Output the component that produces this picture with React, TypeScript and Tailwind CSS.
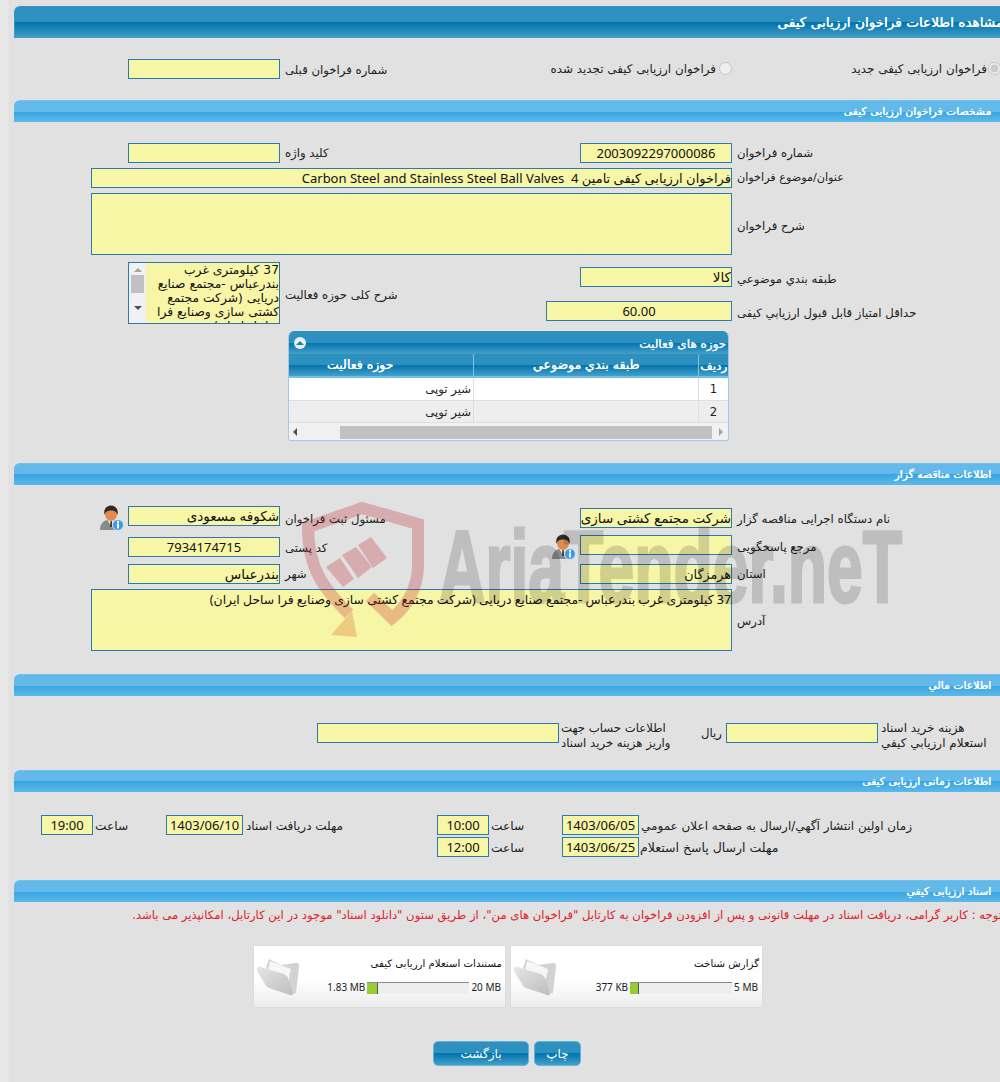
import type { ReactNode } from "react";

const titleBg = "bg-[linear-gradient(#2e90bf_0,#2e90bf_50%,#0074ad_50%,#459fc8_100%)]";
const fourCols = "grid grid-cols-[268px_152px_300px_266px]";
const fauxBold = "[text-shadow:0.5px_0_0_currentColor]";

function Bar({ children }: { children: ReactNode }) {
  return (
    <div className={`h-[22px] rounded-tl-[6px] border-t border-[#6cc4ec] bg-[linear-gradient(#62b9ea_0,#62b9ea_50%,#37a5e0_50%,#5db9ea_100%)] pr-[9px] text-[10.800px] leading-[21px] text-white ${fauxBold}`}>
      {children}
    </div>
  );
}

function Box({ children, className = "", size = "text-[13px]" }: { children?: ReactNode; className?: string; size?: string }) {
  return (
    <div className={`h-5 shrink-0 overflow-hidden border border-[#2a7aaf] bg-[#f7f5a6] font-['Noto_Sans','DejaVu_Sans',sans-serif] ${size} leading-[19px] whitespace-nowrap text-[#111] ${className}`}>
      {children}
    </div>
  );
}

function Label({ children, className = "" }: { children: ReactNode; className?: string }) {
  return <div className={`flex items-center justify-end pl-[5px] text-left whitespace-nowrap ${className}`}>{children}</div>;
}

function PersonIcon() {
  return (
    <svg width="24" height="26" viewBox="0 0 24 26" className="shrink-0">
      <path d="M0 25c0-6 3-9 7-10h7c4 1 6 4 6 10z" fill="#8a8a8a" />
      <path d="M7.500 15l3.500 6 3.500-6z" fill="#f4f4f4" />
      <path d="M10.400 16h1.400l.6 6h-2.400z" fill="#3c3c3c" />
      <ellipse cx="11" cy="9" rx="6" ry="7" fill="#e08a4c" />
      <path d="M4.600 10C3 4 7 .500 11 .500s8 3.500 6.400 9.500c-1-3.500-3-4.500-6.400-4.500S5.600 6.500 4.600 10z" fill="#2b2b2b" />
      <circle cx="18" cy="20" r="5.500" fill="#3d9ae0" stroke="#d4e9f8" />
      <rect x="17" y="18.500" width="2" height="5" fill="#fff" />
      <rect x="17" y="15.800" width="2" height="2" fill="#fff" />
    </svg>
  );
}

function FolderIcon() {
  return (
    <svg width="44" height="38" viewBox="0 0 44 38" className="shrink-0">
      <defs>
        <linearGradient id="folder-front" x1="0" y1="0" x2="1" y2="1">
          <stop offset="0" stopColor="#e6e6e6" />
          <stop offset="1" stopColor="#bdbdbd" />
        </linearGradient>
      </defs>
      <path d="M13 1l12 6 15-2c3 0 3 2 3 4l-3 25c0 2-2 2-3 1L10 10z" fill="#d2d2d2" />
      <path d="M14 3l21 8-3 14L12 12z" fill="#f7f7f7" />
      <path d="M1 11c0-2 2-3 4-2l9 3 14 4c2 1 3 2 4 4l5 15c0 2-1 3-3 2L13 30c-2-1-3-2-4-4L1 13z" fill="url(#folder-front)" />
    </svg>
  );
}

function FileCard({ title, used, total, fill }: { title: string; used: string; total: string; fill: number }) {
  return (
    <div className="flex h-[63px] w-[253px] justify-between border border-[#dcdcdc] bg-[linear-gradient(#fff_0,#fff_55%,#ececec_100%)] pt-[11px] pr-[3px] pb-[12px] pl-[2px]">
      <div className="flex flex-col justify-between">
        <div className="text-[10.200px] leading-[14px] text-[#111]">{title}</div>
        <div className="flex items-center gap-[2px] pr-[1px] font-['Noto_Sans',sans-serif] text-[#222]">
          <span dir="ltr" className="text-[10px] whitespace-nowrap">{total}</span>
          <span className="h-3 w-[102px] border-t border-[#8a8a8a] bg-[#eee]" dir="ltr">
            <span className="block h-full border-r border-[#555] bg-[#9c3]" style={{ width: fill }} />
          </span>
          <span dir="ltr" className="text-[10px] whitespace-nowrap">{used}</span>
        </div>
      </div>
      <div className="mt-[1px]">
        <FolderIcon />
      </div>
    </div>
  );
}

function Watermark() {
  return (
    <div className="pointer-events-none absolute inset-0 overflow-hidden" dir="ltr">
      <svg width="140" height="150" viewBox="295 495 140 150" className="absolute top-[495px] left-[295px] opacity-25">
        <path
          d="M349 614C325 590 308 570 308 527L362 508L418 524V565C418 590 405 608 392 618L370 597"
          fill="none"
          stroke="#b8141e"
          strokeWidth="12"
        />
        <polygon points="352,611 331,635 357,637" fill="#d9530f" />
        <polygon points="326,567 340,558 354,579 343,587" fill="#b8141e" />
        <polygon points="342,555 356,547 372,567 358,578" fill="#b8141e" />
        <polygon points="358,545 371,537 387,558 373,568" fill="#b8141e" />
      </svg>
      <div className="absolute top-[507px] left-[439px] origin-left scale-x-[0.63] font-['Liberation_Sans',sans-serif] text-[102px] leading-[120px] font-bold whitespace-nowrap text-black opacity-15 [-webkit-text-stroke:3px_black]">
        AriaTender.neT
      </div>
    </div>
  );
}

export default function App() {
  return (
    <div
      className="relative h-[1082px] w-[1000px] overflow-hidden bg-[#e7e7e7] pl-[8px] font-['DejaVu_Sans',sans-serif] text-[11.700px] text-[#222]"
      dir="rtl"
    >
      <div className="h-full border-l border-[#e4e4e4] bg-[#e1e1e1] pt-[6px] pl-[5px]">
        <div className={`h-8 rounded-tl-[6px] border-t border-l border-[#3a93d0] ${titleBg} text-[13.600px] leading-[31px] whitespace-nowrap text-white ${fauxBold}`}>
          <span className="-mr-[3px] block">مشاهده اطلاعات فراخوان ارزیابی کیفی</span>
        </div>

        <div className={`${fourCols} mt-[21px] h-5`}>
          <label className="flex items-start gap-[1px] text-[11.900px] leading-[21px] whitespace-nowrap">
            <input type="radio" disabled defaultChecked className="m-0 -mr-[1px] mt-[3px] size-[13px]" />
            فراخوان ارزیابی کیفی جدید
          </label>
          <label className="flex items-start gap-[3px] text-[11.900px] leading-[21px] whitespace-nowrap">
            <input type="radio" disabled className="m-0 mt-[3px] size-[13px]" />
            فراخوان ارزیابی کیفی تجدید شده
          </label>
          <Label className="pt-[2px]">شماره فراخوان قبلی</Label>
          <Box className="w-[152px]" />
        </div>

        <div className="mt-[21px]">
          <Bar>مشخصات فراخوان ارزیابی کیفی</Bar>
        </div>
        <div className={`${fourCols} mt-[21px] h-5`}>
          <Label className="pt-[2px]">شماره فراخوان</Label>
          <Box className="w-[152px] text-center">2003092297000086</Box>
          <Label className="pt-[2px]">کلید واژه</Label>
          <Box className="w-[152px]" />
        </div>
        <div className={`${fourCols} mt-[5px] h-5`}>
          <Label className="pt-[1px] text-[11.200px]">عنوان/موضوع فراخوان</Label>
          <Box className="col-span-3 w-[641px]">فراخوان ارزیابی کیفی تامین 4&nbsp; Carbon Steel and Stainless Steel Ball Valves</Box>
        </div>
        <div className={`${fourCols} mt-[5px] h-[62px]`}>
          <Label className="pt-[5px]">شرح فراخوان</Label>
          <Box className="col-span-3 h-[62px] w-[641px]" />
        </div>

        <div className={`${fourCols} mt-[7px] h-[62px] grid-rows-[39px_23px]`}>
          <Label className="items-start pt-[9px]">طبقه بندي موضوعي</Label>
          <Box className="mt-[5px] w-[152px]" size="text-[13.500px]">كالا</Box>
          <Label className="row-span-2 pt-[6px]">شرح کلی حوزه فعالیت</Label>
          <div className="row-span-2 flex h-[62px] w-[152px] overflow-hidden border border-[#2a7aaf] bg-[#f7f5a6] text-[12.300px] leading-[14px] text-[#111]">
            <div className="flex-1">37 کیلومتری غرب بندرعباس -مجتمع صنایع دریایی (شرکت مجتمع کشتی سازی وصنایع فرا ساحل ایران)</div>
            <div className="flex w-[17px] shrink-0 flex-col items-center bg-[#f1f1f1] py-[5px]">
              <span className="size-0 border-x-[4px] border-b-[4px] border-x-transparent border-b-[#a3a3a3]" />
              <span className="mt-[3px] h-[18px] w-[13px] bg-[#c1c1c1]" />
              <span className="mt-[13px] size-0 border-x-[4px] border-t-[4px] border-x-transparent border-t-[#505050]" />
            </div>
          </div>
          <Label className="pt-[2px]">حداقل امتياز قابل قبول ارزیابي کیفی</Label>
          <Box className="w-[186px] text-center">60.00</Box>
        </div>

        <div className="mt-[7px] mr-[271px] h-[110px] w-[441px] overflow-hidden rounded-t-[6px] rounded-b-[3px] border-x border-b border-[#a3c9e6]">
          <div className={`flex h-[23px] items-center justify-between ${titleBg} pr-[2px] pl-[5px] text-[12px] text-[#eef7fc] ${fauxBold}`}>
            <span className="pt-[2px]">حوزه های فعالیت</span>
            <span className="flex size-3 items-center justify-center rounded-full bg-[#e6f1f8]">
              <span className="size-0 border-x-[4px] border-b-[4px] border-x-transparent border-b-[#1b7fb2]" />
            </span>
          </div>
          <div className={`flex h-6 border-b-2 border-[#6fc0ea] ${titleBg} text-center text-[12.500px] leading-[22px] text-white ${fauxBold}`}>
            <div className="w-[30px] shrink-0 border-l border-[#7fc4e8] pt-[1px] text-[12px] whitespace-nowrap">ردیف</div>
            <div className="w-[225px] shrink-0 border-l border-[#7fc4e8]">طبقه بندي موضوعي</div>
            <div className="w-[226px] shrink-0">حوزه فعالیت</div>
          </div>
          {["1", "2"].map((n, i) => (
            <div className={`flex h-[22.500px] border-b border-[#dfdfdf] leading-[23px] ${i === 0 ? "bg-white" : "bg-[#eee]"}`} key={n}>
              <div className="w-[30px] shrink-0 border-l border-[#dfdfdf] text-center">{n}</div>
              <div className="w-[225px] shrink-0 border-l border-[#dfdfdf]" />
              <div className="w-[226px] shrink-0 pr-[2px]">شیر توپی</div>
            </div>
          ))}
          <div className="flex h-[18px] items-center bg-[#f1f1f1]" dir="ltr">
            <span className="ml-[4px] size-0 border-y-[4px] border-r-[4px] border-y-transparent border-r-[#505050]" />
            <span className="ml-[43px] h-[13px] w-[372px] bg-[#c1c1c1]" />
            <span className="ml-[7px] size-0 border-y-[4px] border-l-[4px] border-y-transparent border-l-[#a3a3a3]" />
          </div>
        </div>

        <div className="mt-[22px]">
          <Bar>اطلاعات مناقصه گزار</Bar>
        </div>
        <div className={`${fourCols} mt-[21px] h-[22px]`}>
          <Label className="pt-[2px]">نام دستگاه اجرایی مناقصه گزار</Label>
          <Box className="mt-[2px] w-[152px]" size="text-[13.500px]">شرکت مجتمع کشتی سازی و صنایع فرا ساحل ایران</Box>
          <Label className="pt-[2px]">مسئول ثبت فراخوان</Label>
          <div className="flex items-start gap-[4px]">
            <Box className="w-[152px]" size="text-[13.500px]">شکوفه مسعودی</Box>
            <div className="-mt-[1px]">
              <PersonIcon />
            </div>
          </div>
        </div>
        <div className={`${fourCols} mt-[7px] h-[22px]`}>
          <Label>مرجع پاسخگویی</Label>
          <div className="flex items-start gap-[4px]">
            <Box className="w-[152px]" />
            <div className="-mt-[1px]">
              <PersonIcon />
            </div>
          </div>
          <Label className="pt-[2px]">کد پستی</Label>
          <Box className="mt-[2px] w-[152px] text-center">7934174715</Box>
        </div>
        <div className={`${fourCols} mt-[7px] h-5`}>
          <Label className="pt-[2px]">استان</Label>
          <Box className="w-[152px]" size="text-[12.700px]">هرمزگان</Box>
          <Label className="pt-[2px]">شهر</Label>
          <Box className="w-[152px]" size="text-[13.500px]">بندرعباس</Box>
        </div>
        <div className={`${fourCols} mt-[5px] h-[62px]`}>
          <Label className="pt-[4px]">آدرس</Label>
          <Box className="col-span-3 h-[62px] w-[641px] whitespace-normal" size="text-[12.400px]">37 کیلومتری غرب بندرعباس -مجتمع صنایع دریایی (شرکت مجتمع کشتی سازی وصنایع فرا ساحل ایران)</Box>
        </div>

        <div className="mt-[23px]">
          <Bar>اطلاعات مالي</Bar>
        </div>
        <div className="mt-[27px] flex h-5 items-center">
          <div className="mt-[5px] w-[122px] pl-[3px] text-left text-[12px] leading-[15px] whitespace-nowrap">
            <div>هزینه خرید اسناد</div>
            <div>استعلام ارزیابي کیفي</div>
          </div>
          <Box className="w-[152px]" />
          <div className="w-[54px] pt-[2px] pr-[4px]">ریال</div>
          <div className="mt-[5px] w-[113px] pl-[2px] text-left leading-[15px] whitespace-nowrap">
            <div>اطلاعات حساب جهت</div>
            <div>واریز هزینه خرید اسناد</div>
          </div>
          <Box className="w-[242px]" />
        </div>

        <div className="mt-[27px]">
          <Bar>اطلاعات زمانی ارزیابی کیفی</Bar>
        </div>
        <div className="mt-[23px] grid grid-cols-[361px_77px_73px_52px_194px_77px_73px_52px] grid-rows-[20px_20px] items-center gap-y-[2px] text-left">
          <div className="pt-[2px] pl-[2px] text-[12px]">زمان اولین انتشار آگهي/ارسال به صفحه اعلان عمومي</div>
          <Box className="text-center">1403/06/05</Box>
          <div className="pt-[2px] pl-[2px] text-[12.200px]">ساعت</div>
          <Box className="text-center">10:00</Box>
          <div className="pt-[2px] pl-[3px] text-[12px]">مهلت دریافت اسناد</div>
          <Box className="text-center">1403/06/10</Box>
          <div className="pt-[2px] pl-[2px] text-[12.200px]">ساعت</div>
          <Box className="text-center">19:00</Box>
          <div className="pt-[2px] pl-[1px] text-[12.500px]">مهلت ارسال پاسخ استعلام</div>
          <Box className="text-center">1403/06/25</Box>
          <div className="pt-[2px] pl-[2px] text-[12.200px]">ساعت</div>
          <Box className="text-center">12:00</Box>
        </div>

        <div className="mt-[23px]">
          <Bar>اسناد ارزیابی کیفي</Bar>
        </div>
        <div className="mt-[5px] h-4 text-[11.630px] leading-4 whitespace-nowrap text-[#e0202c]">
          <span className="-mr-[2px] block">
            توجه : کاربر گرامی، دریافت اسناد در مهلت قانونی و پس از افزودن فراخوان به کارتابل "فراخوان های من"، از طریق ستون "دانلود اسناد" موجود در این کارتابل، امکانپذیر می باشد.
          </span>
        </div>

        <div className="mt-[22px] mr-[237px] flex gap-[4px]">
          <FileCard title="گزارش شناخت" used="377 KB" total="5 MB" fill={9} />
          <FileCard title="مستندات استعلام ارزیابی کیفی" used="1.83 MB" total="20 MB" fill={11} />
        </div>

        <div className="mt-[33px] mr-[419px] flex gap-[5px] text-[12px] text-white">
          <button className={`h-[25px] w-[47px] rounded-[5px] border border-[#5db5e0] pt-[1px] ${titleBg}`}>چاپ</button>
          <button className={`h-[25px] w-[96px] rounded-[5px] border border-[#5db5e0] pt-[1px] ${titleBg}`}>بازگشت</button>
        </div>
      </div>
      <Watermark />
    </div>
  );
}
